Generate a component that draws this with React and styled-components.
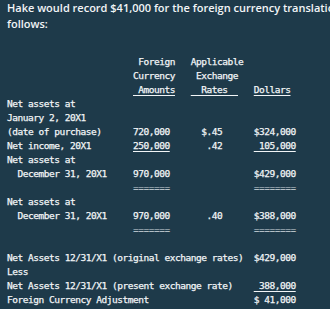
import React from "react";
import styled, { createGlobalStyle } from "styled-components";

const Global = createGlobalStyle`
  html, body { margin: 0; padding: 0; background: #1e3a4a; }
  body { overflow: hidden; width: 330px; height: 309px; }
`;

const Page = styled.div`
  background: #1e3a4a;
  color: #f2f5f7;
  padding: 0 0 0 7px;
  width: 330px;
  height: 309px;
  box-sizing: border-box;
  overflow: hidden;
`;

const Intro = styled.p`
  margin: 0;
  font-family: "Open Sans", "Noto Sans", sans-serif;
  font-weight: 600;
  font-size: 11px;
  line-height: 16px;
  white-space: nowrap;
`;

const Table = styled.pre`
  margin: 23px 0 0 0;
  font-family: "DejaVu Sans Mono", "Liberation Mono", monospace;
  font-size: 9.5px;
  letter-spacing: -0.47px;
  line-height: 14px;
  white-space: pre;
  -webkit-text-stroke: 0.25px #f2f5f7;
`;

const Line = styled.div`
  height: 14px;
`;

const U = styled.span`
  text-decoration: underline;
  text-underline-offset: 2px;
`;

const Rule = styled.span`
  color: #cfd8de;
  -webkit-text-stroke: 0;
`;

const lines = [
  [[25, "Foreign"], [35, "Applicable"]],
  [[24, "Currency"], [36, "Exchange"]],
  [[24, " Amounts", "u"], [35, "  Rates  ", "u"], [47, "Dollars", "u"]],
  [[0, "Net assets at"]],
  [[0, "January 2, 20X1"]],
  [[0, "(date of purchase)"], [24, "720,000"], [37, "$.45"], [47, "$324,000"]],
  [[0, "Net income, 20X1"], [24, "250,000", "u"], [38, ".42"], [47, " 105,000", "u"]],
  [[0, "Net assets at"]],
  [[2, "December 31, 20X1"], [24, "970,000"], [47, "$429,000"]],
  [[24, "=======", "r"], [47, "========", "r"]],
  [[0, "Net assets at"]],
  [[2, "December 31, 20X1"], [24, "970,000"], [38, ".40"], [47, "$388,000"]],
  [[24, "=======", "r"], [47, "========", "r"]],
  [],
  [[0, "Net Assets 12/31/X1 (original exchange rates)"], [47, "$429,000"]],
  [[0, "Less"]],
  [[0, "Net Assets 12/31/X1 (present exchange rate)"], [47, " 388,000", "u"]],
  [[0, "Foreign Currency Adjustment"], [47, "$ 41,000"]],
];

function renderLine(segs) {
  let pos = 0;
  const out = [];
  segs.forEach(([col, text, kind], i) => {
    if (col > pos) out.push(" ".repeat(col - pos));
    if (kind === "u") out.push(<U key={i}>{text}</U>);
    else if (kind === "r") out.push(<Rule key={i}>{text}</Rule>);
    else out.push(text);
    pos = col + text.length;
  });
  return out.length ? out : " ";
}

export default function App() {
  return (
    <Page>
      <Global />
      <Intro>
        Hake would record $41,000 for the foreign currency translation adjustment as
        <br />
        follows:
      </Intro>
      <Table>
        {lines.map((segs, i) => (
          <Line key={i}>{renderLine(segs)}</Line>
        ))}
      </Table>
    </Page>
  );
}
